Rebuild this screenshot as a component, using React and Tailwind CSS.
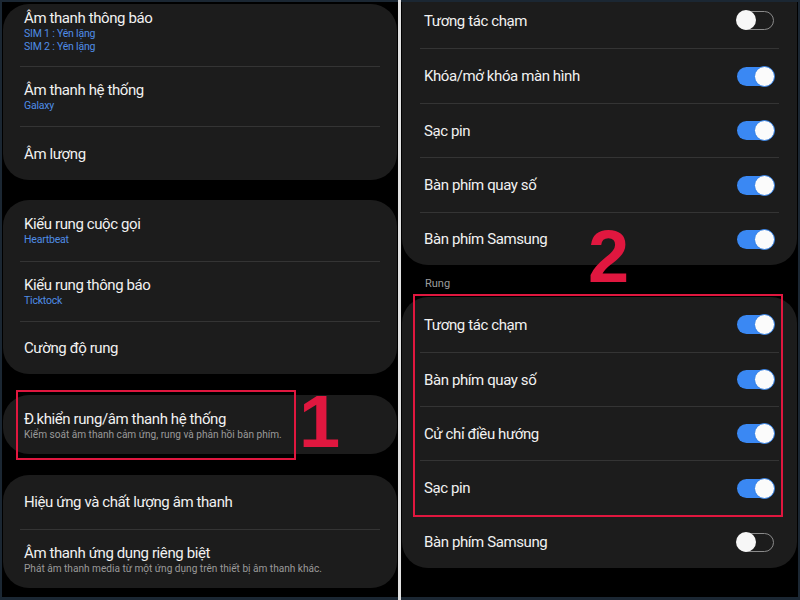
const font = { fontFamily: 'Roboto, "Noto Sans", sans-serif' };

function Toggle({ on }) {
    if (on) {
        return (
            <div className="relative w-[37px] h-[19px] rounded-full bg-[#3a88f3] shrink-0">
                <div className="absolute right-[-1px] top-[-1px] w-[21px] h-[21px] rounded-full bg-[#fbfbfb] border border-[#2f7fe8]" />
            </div>
        );
    }
    return (
        <div className="relative w-[37px] h-[19px] rounded-full border-[1.5px] border-[#8a8a8a] bg-[#1c1c1c] shrink-0">
            <div className="absolute left-[-2px] top-[-2px] w-[20px] h-[20px] rounded-full bg-[#f7f7f7]" />
        </div>
    );
}

function Row({ h, title, sub, subColor = 'blue', first, extra = '' }) {
    const subClass =
        subColor === 'blue'
            ? 'text-[10.5px] leading-[12.5px] tracking-[-0.2px] text-[#4f8de6]'
            : 'text-[10.1px] leading-[12px] text-[#9a9a9a]';
    return (
        <div
            className={`flex flex-col justify-center pl-[4px] ${first ? '' : 'border-t border-[#343434]'} ${extra}`}
            style={{ height: h }}
        >
            <div className="text-[15px] leading-[20px] tracking-[-0.4px] text-[#f1f1f1]">{title}</div>
            {sub &&
                sub.map((s) => (
                    <div key={s} className={subClass}>
                        {s}
                    </div>
                ))}
        </div>
    );
}

function ToggleRow({ h, title, on, first, extra = '' }) {
    return (
        <div
            className={`flex items-center justify-between pl-[4px] pr-[5px] ${first ? '' : 'border-t border-[#343434]'} ${extra}`}
            style={{ height: h }}
        >
            <span className="text-[15px] leading-[20px] tracking-[-0.4px] text-[#f1f1f1]">{title}</span>
            <Toggle on={on} />
        </div>
    );
}

export default function App() {
    return (
        <div
            className="relative w-[800px] h-[600px] bg-[#1b2733] flex pt-[2px] pl-[2px] pr-[2px] pb-[3px] overflow-hidden"
            style={font}
        >
            {/* Left screen */}
            <div className="w-[396px] h-full bg-black px-[1px] flex flex-col">
                <div className="mt-[2px] bg-[#1c1c1c] rounded-[26px] px-[17px]">
                    <Row h={62} title="Âm thanh thông báo" sub={['SIM 1 : Yên lặng', 'SIM 2 : Yên lặng']} first extra="!justify-start pt-[4px]" />
                    <Row h={60} title="Âm thanh hệ thống" sub={['Galaxy']} />
                    <Row h={54} title="Âm lượng" />
                </div>

                <div className="mt-[20px] bg-[#1c1c1c] rounded-[26px] px-[17px]">
                    <Row h={61} title="Kiểu rung cuộc gọi" sub={['Heartbeat']} first />
                    <Row h={60} title="Kiểu rung thông báo" sub={['Ticktock']} />
                    <Row h={53} title="Cường độ rung" />
                </div>

                <div className="mt-[21px] bg-[#1c1c1c] rounded-[26px] px-[17px]">
                    <Row
                        h={59}
                        title="Đ.khiển rung/âm thanh hệ thống"
                        sub={['Kiểm soát âm thanh cảm ứng, rung và phản hồi bàn phím.']}
                        subColor="gray"
                        first
                    />
                </div>

                <div className="mt-[21px] bg-[#1c1c1c] rounded-[26px] px-[17px]">
                    <Row h={54} title="Hiệu ứng và chất lượng âm thanh" first />
                    <Row
                        h={59}
                        title="Âm thanh ứng dụng riêng biệt"
                        sub={['Phát âm thanh media từ một ứng dụng trên thiết bị âm thanh khác.']}
                        subColor="gray"
                    />
                </div>
            </div>

            {/* Divider between screenshots */}
            <div className="w-[3px] h-[600px] -mt-[2px] bg-[#e2e2e2] shrink-0" />

            {/* Right screen */}
            <div className="flex-1 h-full bg-black px-[1px] flex flex-col">
                <div className="bg-[#1c1c1c] rounded-b-[26px] px-[18px]">
                    <ToggleRow h={46} title="Tương tác chạm" on={false} first extra="pb-[9px]" />
                    <ToggleRow h={55} title="Khóa/mở khóa màn hình" on />
                    <ToggleRow h={54} title="Sạc pin" on />
                    <ToggleRow h={55} title="Bàn phím quay số" on />
                    <ToggleRow h={53} title="Bàn phím Samsung" on />
                </div>

                <div className="h-[32px] pl-[23px] pt-[12px] text-[11px] leading-[14px] text-[#9c9c9c]">Rung</div>

                <div className="bg-[#1c1c1c] rounded-[26px] px-[18px]">
                    <ToggleRow h={55} title="Tương tác chạm" on first />
                    <ToggleRow h={54} title="Bàn phím quay số" on />
                    <ToggleRow h={54} title="Cử chỉ điều hướng" on />
                    <ToggleRow h={55} title="Sạc pin" on />
                    <ToggleRow h={53} title="Bàn phím Samsung" on={false} />
                </div>
            </div>

            {/* Annotations */}
            <div className="absolute left-[16px] top-[390px] w-[280px] h-[70px] border-[2.5px] border-[#e0173f]" />
            <div
                className="absolute left-[299px] top-[385px] text-[74px] leading-[74px] font-bold text-[#e0173f]"
                style={{ fontFamily: '"Liberation Sans", Arial, sans-serif' }}
            >
                1
            </div>
            <div className="absolute left-[413px] top-[294px] w-[370px] h-[223px] border-[2.5px] border-[#e0173f]" />
            <div
                className="absolute left-[588px] top-[220px] text-[74px] leading-[74px] font-bold text-[#e0173f]"
                style={{ fontFamily: '"Liberation Sans", Arial, sans-serif' }}
            >
                2
            </div>
        </div>
    );
}
